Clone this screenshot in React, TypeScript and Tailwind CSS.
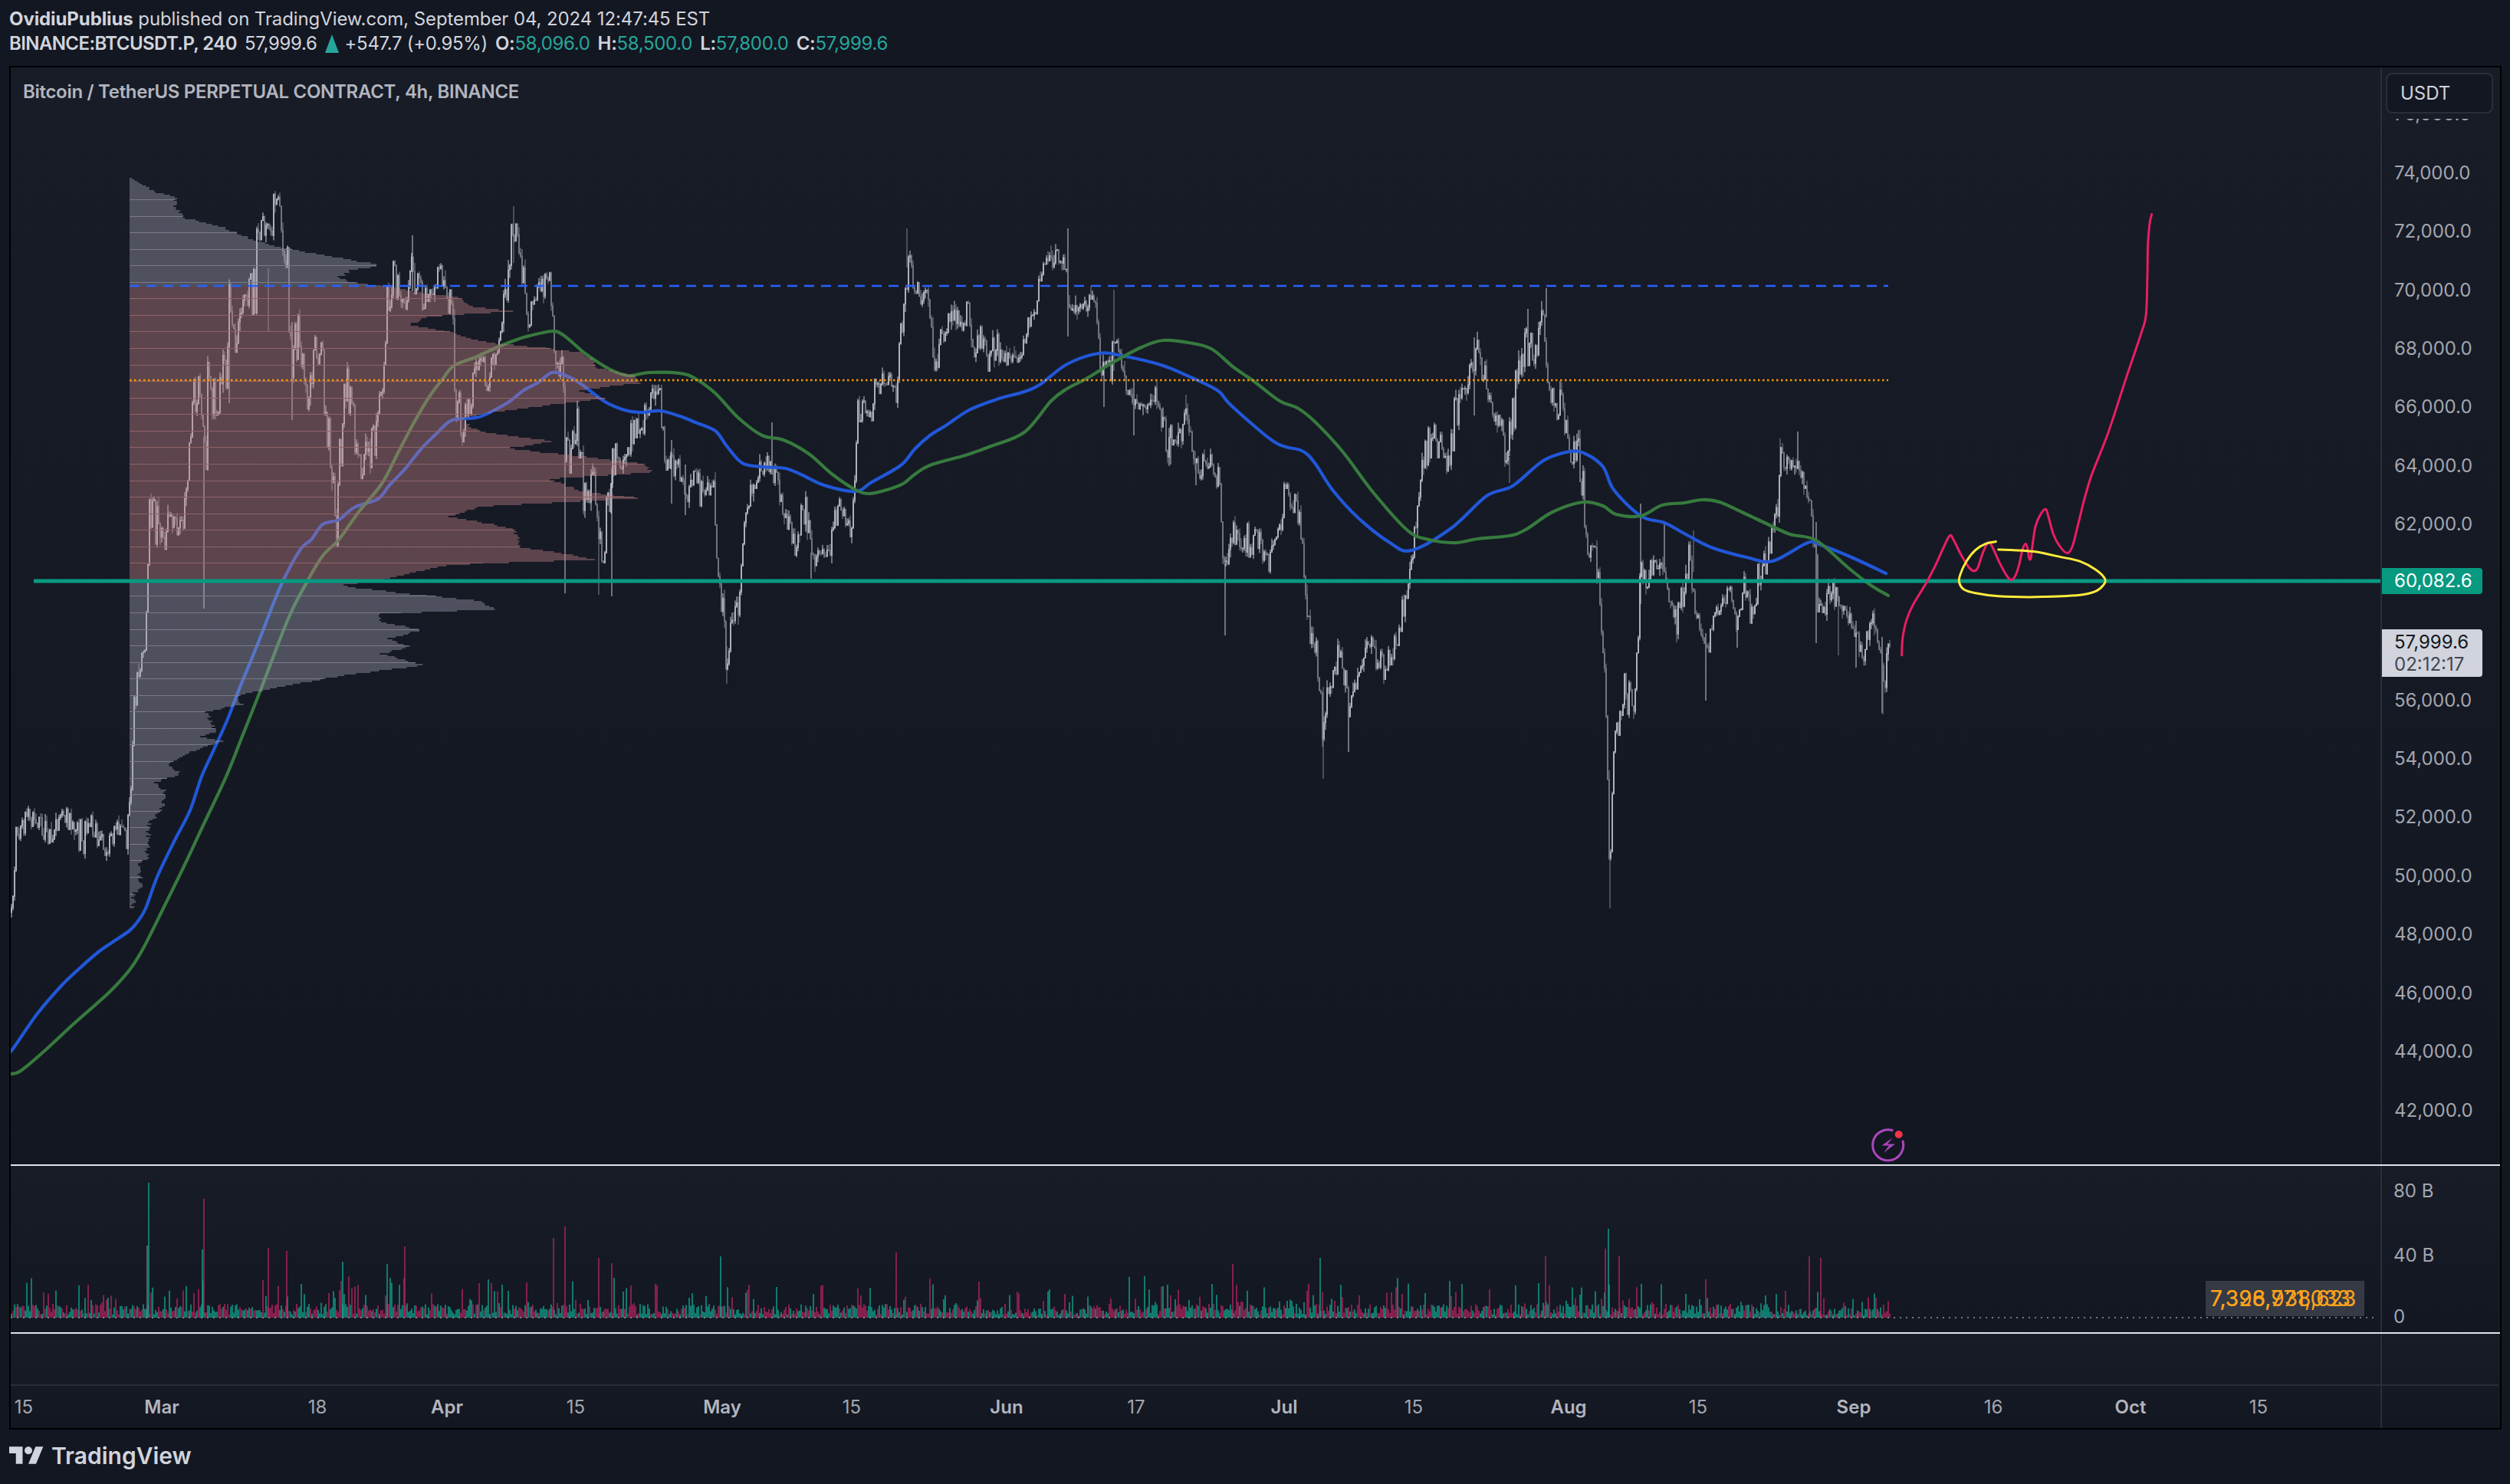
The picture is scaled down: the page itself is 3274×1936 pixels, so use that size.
type Pt = [number, number];

// candle envelope, [x, top, bottom], page pixels
const ENV: [number, number, number][] = [
  [14,1175,1207],[18,1148,1172],[21,1075,1100],[28,1070,1095],[30,1062,1092],[40,1050,1085],[48,1060,1095],[62,1065,1120],[70,1075,1095],[80,1048,1075],[90,1050,1095],[98,1060,1100],[108,1065,1125],[120,1060,1095],[130,1080,1110],[140,1095,1120],[150,1070,1095],[158,1075,1100],[165,1085,1110],[168,1040,1100],[172,960,1040],[175,905,970],[178,860,910],[185,850,905],[188,818,860],[192,770,825],
  [193,690,760],[197,597,690],[200,624,713],[210,691,735],[220,642,709],[230,678,709],[238,673,705],[245,593,673],[250,503,584],[258,423,557],[263,405,570],[267,468,713],[273,468,539],[284,490,544],[291,454,512],[299,370,526],[309,423,459],[319,378,414],[332,320,437],[337,271,316],[350,289,352],[358,236,280],[365,245,280],[375,285,400],[381,419,504],[391,388,468],[401,512,557],[411,423,468],[419,432,504],[432,579,646],[439,601,727],[452,468,521],[462,521,584],[472,593,646],[480,566,624],[493,530,584],[500,472,499],[506,329,410],[518,347,401],[528,392,423],[539,320,379],[551,370,405],[559,370,396],[580,325,370],[590,387,450],[595,490,548],[602,526,584],[613,512,548],[625,432,486],[636,468,530],[648,450,472],[656,392,423],[669,271,343],[679,312,356],[689,396,432],[705,329,392],[717,343,392],[725,463,504],[733,459,486],[738,557,655],[743,579,624],[753,530,580],[763,624,695],[773,597,629],[784,691,771],[794,611,691],[804,557,602],[812,602,629],
  [820,557,598],[836,517,574],[851,492,541],[861,500,525],[866,566,619],[879,574,631],[889,606,631],[897,639,660],[907,598,639],[920,639,688],[930,606,639],[935,700,729],[940,729,790],[948,843,892],[953,786,851],[963,770,806],[971,680,708],[979,631,655],[989,598,631],[1001,590,619],[1014,606,647],[1024,655,680],[1037,696,725],[1050,635,680],[1060,721,741],[1075,713,733],[1086,688,729],[1093,635,668],[1106,680,708],[1114,647,688],[1119,517,578],[1126,513,541],[1134,545,566],[1142,480,525],[1152,488,504],[1162,484,500],[1170,513,533],[1178,317,476],[1185,321,349],[1193,370,402],[1203,358,398],[1211,378,402],[1218,455,500],[1226,410,468],[1236,402,431],[1249,402,423],[1257,419,435],[1262,358,419],[1269,443,472],[1280,423,451],[1290,451,488],[1300,423,476],[1310,460,480],[1323,460,472],[1333,451,472],[1341,411,431],[1348,407,431],[1356,349,374],[1364,329,349],[1374,329,349],[1382,321,345],[1389,317,353],[1394,394,411],[1405,398,406],[1417,386,406],[1430,374,406],[1435,439,500],[1440,476,525],[1453,431,484],[1463,460,484],[1468,496,521],[1484,521,533],[1494,525,537],[1507,500,521],[1514,521,566],[1524,558,602],[1532,545,578],[1540,558,582],[1547,525,549],[1555,574,594],[1563,598,627],
  [1566,590,628],[1580,590,606],[1589,606,644],[1594,655,708],[1600,735,826],[1609,671,724],[1620,692,724],[1632,676,730],[1643,692,719],[1652,724,756],[1666,692,724],[1675,617,665],[1683,628,665],[1692,638,676],[1698,681,735],[1703,735,783],[1712,810,880],[1718,831,885],[1726,896,992],[1732,890,912],[1747,826,880],[1755,869,922],[1761,917,954],[1770,869,906],[1781,831,863],[1792,831,869],[1807,858,890],[1815,831,869],[1827,783,831],[1836,751,778],[1844,649,724],[1850,638,665],[1858,574,638],[1867,542,590],[1879,564,612],[1887,601,633],[1896,494,612],[1904,510,521],[1916,472,510],[1925,440,488],[1936,451,499],[1947,526,553],[1959,547,558],[1965,596,628],[1973,488,596],[1985,451,478],[1993,414,478],[2002,456,483],[2013,387,414],[2019,488,520],[2028,510,542],[2039,505,558],[2048,574,628],[2057,574,638],[2065,553,670],[2071,681,735],[2085,724,762],[2091,783,874],[2097,976,1056],[2099,1060,1160],[2101,1090,1165],[2105,949,1003],[2111,912,965],[2120,874,917],[2128,896,965],[2134,853,890],[2140,703,788],[2148,713,772],[2157,719,746],[2166,724,740],[2174,746,767],[2183,799,842],[2191,772,815],[2203,708,746],[2211,788,810],[2220,805,831],[2229,826,858],[2237,778,805],[2249,778,794],[2257,756,778],[2266,815,831],[2275,713,778],[2283,788,815],[2295,719,788],[2306,713,735],[2318,606,724],[2323,580,617],[2335,601,617],[2346,596,612],[2355,628,644],[2361,649,660],[2367,681,735],[2372,772,815],[2381,783,810],[2389,730,788],[2398,778,815],[2410,794,810],[2421,810,842],[2430,842,869],[2441,788,820],[2453,831,863],[2458,885,912],[2462,820,873],
];

// long wicks, [x, y1, y2]
const SPIKES: [number, number, number][] = [
  [266,570,794],[299,367,526],[350,350,432],[381,420,548],[538,307,380],[670,269,343],[737,557,774],[798,611,778],[781,691,776],[876,574,657],[894,606,672],[948,843,892],[1007,551,619],[1058,721,755],[1183,298,349],[1393,298,439],[1440,476,531],[1453,378,484],[1479,496,568],[1527,558,606],[1547,515,549],[1560,598,633],[1598,735,829],[1726,896,1016],[1759,917,981],[1923,440,542],[1969,596,630],[1993,403,478],[2017,376,414],[2100,1120,1185],[2140,657,788],[2171,684,746],[2209,692,746],[2225,826,914],[2266,815,845],[2322,572,617],[2345,563,612],[2369,681,839],[2398,778,855],[2421,810,871],[2455,831,930],[2456,880,932],
];

const BLUE: Pt[] = [
  [14,1372],[22,1361],[49,1322],[80,1286],[103,1264],[127,1243],[147,1229],[169,1214],[179,1203],[190,1185],[205,1144],[228,1096],[248,1057],[263,1013],[279,978],[297,938],[312,899],[337,838],[365,767],[391,718],[406,704],[421,684],[442,678],[462,662],[493,651],[508,633],[529,611],[549,586],[569,566],[590,548],[625,544],[661,526],[682,510],[702,499],[720,486],[738,490],[758,501],[789,524],[815,535],[836,538],[861,536],[887,543],[907,551],[933,562],[948,582],[968,604],[994,609],[1024,611],[1045,619],[1075,633],[1116,641],[1137,629],[1175,607],[1193,586],[1213,568],[1234,555],[1264,535],[1300,521],[1336,511],[1356,502],[1392,475],[1433,461],[1463,464],[1514,476],[1555,493],[1589,510],[1606,529],[1663,577],[1698,588],[1715,604],[1738,639],[1772,676],[1813,708],[1841,718],[1893,689],[1939,647],[1973,634],[2013,601],[2048,589],[2068,592],[2091,609],[2105,639],[2140,673],[2171,682],[2197,696],[2232,714],[2278,727],[2312,732],[2358,708],[2375,711],[2415,727],[2460,748],
];

const GREEN: Pt[] = [
  [14,1401],[27,1397],[58,1371],[98,1334],[143,1294],[170,1264],[188,1235],[214,1183],[241,1128],[263,1081],[295,1013],[317,958],[340,900],[376,807],[401,758],[421,725],[442,704],[467,669],[498,631],[518,593],[539,553],[559,519],[577,495],[592,477],[620,466],[651,452],[666,446],[687,439],[720,432],[733,436],[748,448],[763,461],[794,481],[820,490],[846,486],[887,487],[907,494],[933,513],[963,545],[994,568],[1022,574],[1055,592],[1086,619],[1116,639],[1134,644],[1157,639],[1178,631],[1193,619],[1213,607],[1259,594],[1290,583],[1336,564],[1371,523],[1392,507],[1417,494],[1453,472],[1489,453],[1517,444],[1550,447],[1580,455],[1609,479],[1635,497],[1669,523],[1692,532],[1715,550],[1752,590],[1790,641],[1836,692],[1864,704],[1899,708],[1927,703],[1968,699],[1990,691],[2025,668],[2065,655],[2091,660],[2108,671],[2140,673],[2168,659],[2197,656],[2220,652],[2243,655],[2272,668],[2306,684],[2335,697],[2369,705],[2410,740],[2438,762],[2463,777],
];

// volume profile right edge, [y, x]
const PROFILE: Pt[] = [
  [230,169],[238,182],[249,202],[256,228],[271,230],[283,240],[292,279],[300,302],[309,322],[320,355],[329,406],[338,457],[345,498],[352,457],[361,442],[367,457],[373,508],[381,549],[387,600],[399,615],[405,671],[412,559],[423,534],[432,585],[446,636],[452,702],[459,758],[468,773],[479,779],[490,830],[499,835],[508,753],[519,789],[528,712],[537,641],[546,600],[562,625],[575,722],[584,661],[595,763],[604,840],[615,850],[624,717],[640,758],[649,835],[660,625],[673,585],[682,636],[689,671],[702,677],[713,677],[722,743],[729,773],[736,585],[747,534],[756,498],[763,442],[774,534],[783,625],[794,648],[800,498],[809,493],[821,549],[832,508],[843,534],[852,498],[867,554],[879,455],[893,379],[905,312],[918,315],[928,268],[954,283],[960,259],[966,290],[982,245],[997,219],[1009,237],[1019,203],[1033,216],[1057,210],[1073,194],[1092,194],[1118,192],[1124,183],[1160,183],[1164,174],[1185,174],
];

const PRICES = ["76,000.0","74,000.0","72,000.0","70,000.0","68,000.0","66,000.0","64,000.0","62,000.0","60,000.0","58,000.0","56,000.0","54,000.0","52,000.0","50,000.0","48,000.0","46,000.0","44,000.0","42,000.0"];

const TIMES: { x: number; label: string; bold?: boolean }[] = [
  { x: 31, label: "15" },
  { x: 211, label: "Mar", bold: true },
  { x: 414, label: "18" },
  { x: 583, label: "Apr", bold: true },
  { x: 751, label: "15" },
  { x: 942, label: "May", bold: true },
  { x: 1111, label: "15" },
  { x: 1313, label: "Jun", bold: true },
  { x: 1482, label: "17" },
  { x: 1675, label: "Jul", bold: true },
  { x: 1844, label: "15" },
  { x: 2046, label: "Aug", bold: true },
  { x: 2215, label: "15" },
  { x: 2418, label: "Sep", bold: true },
  { x: 2600, label: "16" },
  { x: 2779, label: "Oct", bold: true },
  { x: 2946, label: "15" },
];

// the hand drawn lines, read off a crop 3x wide and 2.529x high
const fromCrop = (p: Pt): Pt => [2440 + p[0] / 3, 240 + p[1] / 2.529];

const PINK: Pt[] = ([[122,1555],[125,1500],[140,1440],[165,1390],[215,1320],[250,1265],[285,1200],[310,1160],[325,1175],[355,1225],[385,1265],[405,1277],[420,1265],[440,1215],[460,1183],[475,1195],[505,1250],[535,1295],[550,1306],[565,1295],[580,1260],[595,1205],[607,1187],[615,1205],[620,1235],[627,1235],[633,1195],[645,1130],[665,1090],[685,1073],[695,1095],[715,1155],[740,1195],[770,1218],[790,1195],[810,1130],[835,1045],[865,960],[930,820],[1000,640],[1060,490],[1078,430],[1083,300],[1085,200],[1092,130],[1100,100]] as Pt[]).map(fromCrop);

const YELLOW: Pt[] = ([[490,1180],[450,1187],[410,1208],[375,1245],[350,1290],[347,1315],[365,1338],[410,1350],[500,1360],[620,1363],[750,1360],[830,1355],[885,1342],[915,1318],[915,1300],[880,1272],[820,1245],[740,1230],[640,1213],[560,1208],[500,1206]] as Pt[]).map(fromCrop);

const VOL_SPIKES: [number, number, string][] = [
  [192,94,"#787b86"],[194,176,"#0fa58f"],[264,89,"#0fa58f"],[266,155,"#b5245f"],[350,91,"#b5245f"],[374,87,"#b5245f"],[447,73,"#0fa58f"],[505,70,"#0fa58f"],[528,93,"#b5245f"],[722,104,"#b5245f"],[737,119,"#b5245f"],[781,78,"#b5245f"],[798,71,"#b5245f"],[940,80,"#0fa58f"],[1169,85,"#b5245f"],[1608,70,"#b5245f"],[1722,78,"#0fa58f"],[2016,80,"#b5245f"],[2094,90,"#b5245f"],[2098,116,"#0fa58f"],[2112,80,"#b5245f"],[2360,80,"#b5245f"],[2375,78,"#b5245f"],
];

function seeded(seed: number) {
  let s = seed;
  return () => {
    s = (s + 0x6d2b79f5) | 0;
    let t = Math.imul(s ^ (s >>> 15), 1 | s);
    t = (t + Math.imul(t ^ (t >>> 7), 61 | t)) ^ t;
    return ((t ^ (t >>> 14)) >>> 0) / 4294967296;
  };
}

function smooth(pts: Pt[]) {
  let d = `M${pts[0][0]} ${pts[0][1]}`;
  for (let i = 0; i < pts.length - 1; i++) {
    const p0 = pts[Math.max(i - 1, 0)];
    const p1 = pts[i];
    const p2 = pts[i + 1];
    const p3 = pts[Math.min(i + 2, pts.length - 1)];
    const c1x = p1[0] + (p2[0] - p0[0]) / 6;
    const c1y = p1[1] + (p2[1] - p0[1]) / 6;
    const c2x = p2[0] - (p3[0] - p1[0]) / 6;
    const c2y = p2[1] - (p3[1] - p1[1]) / 6;
    d += `C${c1x.toFixed(1)} ${c1y.toFixed(1)} ${c2x.toFixed(1)} ${c2y.toFixed(1)} ${p2[0].toFixed(1)} ${p2[1].toFixed(1)}`;
  }
  return d;
}

function buildCandles() {
  const rand = seeded(11);
  let upBody = "", downBody = "", upWick = "", downWick = "";
  let seg = 0;
  let prevClose = 1190;
  for (let x = 15; x <= 2465; x += 2) {
    while (seg < ENV.length - 2 && ENV[seg + 1][0] < x) seg++;
    const a = ENV[seg];
    const b = ENV[seg + 1];
    const k = Math.min(Math.max((x - a[0]) / (b[0] - a[0]), 0), 1);
    const top = a[1] + (b[1] - a[1]) * k;
    const bot = a[2] + (b[2] - a[2]) * k;
    // every candle opens where the last one closed, so the chain has no holes
    const open = prevClose;
    const close = top + (bot - top) * rand();
    prevClose = close;
    const hi = Math.min(open, close) - rand() * rand() * 14;
    const lo = Math.max(open, close) + rand() * rand() * 14;
    const y1 = Math.min(open, close).toFixed(1);
    const y2 = (Math.max(open, close) + 1).toFixed(1);
    const body = `M${x} ${y1}V${y2}`;
    const wick = `M${x} ${hi.toFixed(1)}V${lo.toFixed(1)}`;
    if (close <= open) {
      upBody += body;
      upWick += wick;
    } else {
      downBody += body;
      downWick += wick;
    }
  }
  SPIKES.forEach(([x, y1, y2], i) => {
    if (i % 3 === 2) downWick += `M${x} ${y1}V${y2}`;
    else upWick += `M${x} ${y1}V${y2}`;
  });
  return { upBody, downBody, upWick, downWick };
}

function profileEdge(y: number) {
  for (let i = 0; i < PROFILE.length - 1; i++) {
    const [y0, x0] = PROFILE[i];
    const [y1, x1] = PROFILE[i + 1];
    if (y >= y0 && y <= y1) return x0 + ((x1 - x0) * (y - y0)) / (y1 - y0);
  }
  return 169;
}

// one stepped polygon per band, no seams between the 2px rows
function profileBand(from: number, to: number, rand: () => number) {
  let d = `M169 ${from}`;
  for (let y = from; y < to; y += 2) {
    const edge = profileEdge(y) + (y > 240 ? (rand() - 0.5) * 7 : 0);
    d += `H${edge.toFixed(1)}V${Math.min(y + 2, to)}`;
  }
  return `${d}H169Z`;
}

function buildProfile() {
  const rand = seeded(5);
  const gray = profileBand(230, 373, rand) + profileBand(758, 1185, rand);
  const red = profileBand(373, 758, rand);
  let grayRows = "", redRows = "";
  for (let y = 260; y < 1180; y += 21.56) {
    const row = `M169 ${Math.round(y) + 0.5}H${profileEdge(y).toFixed(1)}`;
    if (y >= 373 && y < 758) redRows += row;
    else grayRows += row;
  }
  return { gray, red, grayRows, redRows };
}

function buildVolume() {
  const rand = seeded(23);
  const bars: { x: number; h: number; color: string }[] = [];
  for (let x = 15; x <= 2465; x += 2) {
    const calm = x > 2300 || (x > 1320 && x < 1420) ? 0.7 : 1;
    const big = rand() > 0.8 ? rand() * 38 : 0;
    const h = (4 + rand() * 14 + big) * calm;
    bars.push({ x, h, color: rand() > 0.45 ? "#0fa58f" : "#b5245f" });
  }
  VOL_SPIKES.forEach(([x, h, color]) => bars.push({ x, h, color }));
  return bars;
}

const candles = buildCandles();
const profile = buildProfile();
const volume = buildVolume();

const MainChart = () => (
  <svg className="absolute inset-0 h-full w-full" viewBox="14 88 3091 1431">
    <g fill="none">
      <path d={candles.upWick} stroke="#b9bcc6" strokeWidth="1.1" />
      <path d={candles.downWick} stroke="#787b86" strokeWidth="1.1" />
      <path d={candles.downBody} stroke="#787b86" strokeWidth="1.7" />
      <path d={candles.upBody} stroke="#b9bcc6" strokeWidth="1.7" />
      <path d={smooth(BLUE)} stroke="#2157d8" strokeWidth="4.2" strokeLinecap="round" />
      <path d={smooth(GREEN)} stroke="#377a3e" strokeWidth="4.2" strokeLinecap="round" />
    </g>

    {/* volume profile sits over the candles */}
    <path d={profile.gray} fill="rgb(166,162,183)" fillOpacity="0.4" />
    <path d={profile.red} fill="rgb(199,132,138)" fillOpacity="0.4" />
    <path d={profile.grayRows} stroke="#7b7a8a" strokeWidth="1" fill="none" />
    <path d={profile.redRows} stroke="#8f6468" strokeWidth="1" fill="none" />

    <path d="M169 373H2463" stroke="#2962ff" strokeWidth="2.5" strokeDasharray="13 9" />
    <path d="M169 496H2463" stroke="#ff9800" strokeWidth="2.5" strokeDasharray="2.5 3.5" />
    <path d="M44 758H3105" stroke="#089981" strokeWidth="5" />

    <path d={smooth(PINK)} fill="none" stroke="#e91e63" strokeWidth="3" strokeLinecap="round" />
    <path d={smooth(YELLOW)} fill="none" stroke="#ffeb3b" strokeWidth="3" strokeLinecap="round" />

    {/* earnings / event flash */}
    <path d="M2481.7 1487.7A20 20 0 1 1 2469.3 1475" fill="none" stroke="#ab47bc" strokeWidth="3" />
    <polygon points="2469,1484 2454.5,1494.5 2464,1494.5 2457,1504 2472,1492.5 2462,1492.5" fill="#ab47bc" />
    <circle cx="2476.7" cy="1480" r="5" fill="#f23645" />
  </svg>
);

const VolumeChart = () => (
  <svg className="absolute inset-0 h-full w-full" viewBox="14 1521 3091 217">
    {volume.map((b, i) => (
      <path key={i} d={`M${b.x} 1719V${(1719 - b.h).toFixed(1)}`} stroke={b.color} strokeWidth="1.4" />
    ))}
    <path d="M14 1719H3100" stroke="#9598a1" strokeWidth="1.5" strokeDasharray="2 6" />
  </svg>
);

const TvLogo = () => (
  <svg width="45" height="23" viewBox="0 4 36 18" fill="#d1d4dc">
    <path d="M14 22H7V11H0V4h14v18zM28 22h-8l7.5-18h8L28 22z" />
    <circle cx="20" cy="8" r="4" />
  </svg>
);

const Ohlc = ({ k, v }: { k: string; v: string }) => (
  <span className="ml-[10px]">
    <span className="font-semibold">{k}</span>
    <span className="text-[#26a69a]">{v}</span>
  </span>
);

const App = () => {
  return (
    <div className="flex h-[1936px] w-[3274px] flex-col overflow-hidden bg-[#131722] font-[family-name:Inter,sans-serif] text-[#d1d4dc]">
      {/* Header */}
      <div className="flex h-[86px] flex-col gap-[4px] pl-[12px] pt-[11px] text-[24px] leading-[28px] tracking-[-0.1px]">
        <div className="whitespace-nowrap">
          <span className="font-bold">OvidiuPublius</span> published on TradingView.com, September 04, 2024 12:47:45 EST
        </div>
        <div className="flex items-center whitespace-nowrap tracking-[-0.32px]">
          <span className="font-semibold tracking-[-0.6px]">BINANCE:BTCUSDT.P, 240</span>
          <span className="ml-[10px]">57,999.6</span>
          <span className="ml-[10px] h-0 w-0 border-x-[9px] border-b-[24px] border-x-transparent border-b-[#26a69a]" />
          <span className="ml-[8px]">+547.7 (+0.95%)</span>
          <Ohlc k="O:" v="58,096.0" />
          <Ohlc k="H:" v="58,500.0" />
          <Ohlc k="L:" v="57,800.0" />
          <Ohlc k="C:" v="57,999.6" />
        </div>
      </div>

      {/* Chart frame */}
      <div className="ml-[12px] flex h-[1779px] w-[3251px] flex-col border-2 border-black">
        {/* Price pane */}
        <div className="flex h-[1431px] bg-gradient-to-b from-[#181c27] to-[#131722]">
          <div className="relative w-[3091px]">
            <MainChart />
            <div className="absolute left-[16px] top-[18px] text-[24px] font-semibold leading-[28px] tracking-[-0.3px] text-[#b2b5be]">
              Bitcoin / TetherUS PERPETUAL CONTRACT, 4h, BINANCE
            </div>
          </div>
          <div className="relative w-[154px] overflow-hidden border-l-2 border-[#2a2e39] pl-[16px] pt-[23px] text-[24px] text-[#a3a6af]">
            {PRICES.map((p) => (
              <div key={p} className="flex h-[76.44px] items-center">
                {p}
              </div>
            ))}
            {/* currency button, with a strip of pane colour that cuts off the 76,000 label */}
            <div className="absolute left-0 top-0 h-[67px] w-full bg-[#181c27] pl-[5px] pt-[7px]">
              <div className="flex h-[53px] w-[140px] items-center rounded-[8px] border-2 border-[#2a2e39] bg-[#131722] pl-[17px] text-[#d1d4dc]">
                USDT
              </div>
            </div>
            <div className="absolute left-0 top-[653px] flex h-[34px] w-[131px] items-center rounded-r-[4px] bg-[#089981] pl-[16px] text-white">
              60,082.6
            </div>
            <div className="absolute left-0 top-[733px] flex h-[62px] w-[131px] flex-col justify-center rounded-r-[4px] bg-[#d1d4dc] pl-[16px] leading-[29px]">
              <span className="text-[#131722]">57,999.6</span>
              <span className="text-[#434651]">02:12:17</span>
            </div>
          </div>
        </div>

        <div className="h-[2px] bg-[#e0e3eb]" />

        {/* Volume pane */}
        <div className="flex h-[217px] bg-gradient-to-b from-[#181c27] to-[#131722]">
          <div className="relative w-[3091px]">
            <VolumeChart />
            <div className="absolute bottom-[21px] right-[21px] h-[46px] w-[207px] bg-[#363a45] text-[28px] leading-[46px] tracking-[0.1px] text-[#ffa31a]">
              <span className="absolute left-[6px] whitespace-nowrap">7,396,938,623</span>
              <span className="absolute left-[6px] whitespace-nowrap">7,328,771,033</span>
            </div>
          </div>
          <div className="flex w-[154px] flex-col border-l-2 border-[#2a2e39] pl-[15px] pt-[18px] text-[24px] leading-[30px] text-[#a3a6af]">
            <div className="mb-[54px]">80 B</div>
            <div className="mb-[50px]">40 B</div>
            <div>0</div>
          </div>
        </div>

        <div className="h-[2px] bg-[#e0e3eb]" />

        {/* Empty pane + time axis */}
        <div className="flex flex-1 bg-gradient-to-b from-[#181c27] to-[#131722]">
          <div className="flex w-[3091px] flex-col">
            <div className="h-[68px] border-b-2 border-[#2a2e39]" />
            <div className="relative flex-1 text-[24px]">
              {TIMES.map((t) => (
                <span
                  key={t.x}
                  className={`absolute top-[28px] -translate-x-1/2 -translate-y-1/2 ${t.bold ? "font-semibold text-[#b2b5be]" : "text-[#a3a6af]"}`}
                  style={{ left: t.x - 14 }}
                >
                  {t.label}
                </span>
              ))}
            </div>
          </div>
          <div className="w-[154px] border-l-2 border-[#2a2e39]">
            <div className="h-[68px] border-b-2 border-[#2a2e39]" />
          </div>
        </div>
      </div>

      {/* Footer logo */}
      <div className="flex flex-1 items-center gap-[10px] pb-[4px] pl-[12px]">
        <TvLogo />
        <span className="text-[30px] font-semibold leading-none text-[#d1d4dc]">TradingView</span>
      </div>
    </div>
  );
};

export default App;
